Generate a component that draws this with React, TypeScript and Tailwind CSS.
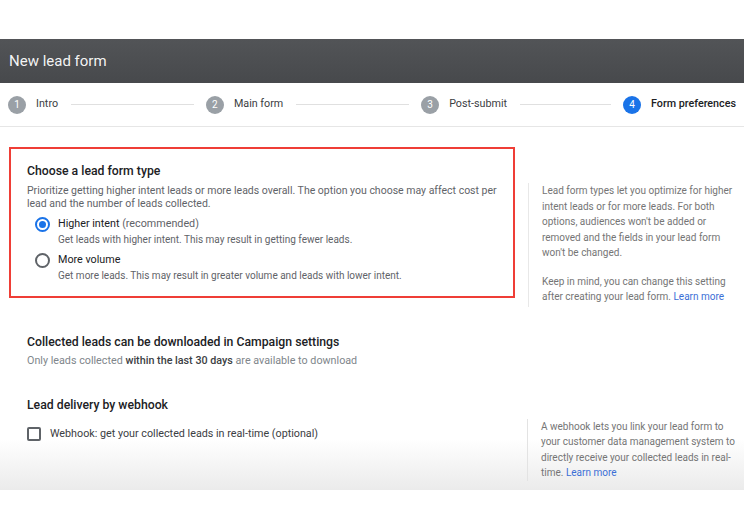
import { Fragment } from "react";

const STEPS = [
  { n: 1, label: "Intro", line: "basis-[122px]" },
  { n: 2, label: "Main form", line: "basis-[112px]" },
  { n: 3, label: "Post-submit", line: "basis-[90px]" },
  { n: 4, label: "Form preferences", active: true },
];

function Radio({ checked }: { checked?: boolean }) {
  return (
    <span
      className={`mt-[1px] flex size-[15px] shrink-0 items-center justify-center rounded-full border-2 ${
        checked ? "border-[#1a73e8]" : "border-[#5f6368]"
      }`}
    >
      {checked && <span className="size-[7px] rounded-full bg-[#1a73e8]" />}
    </span>
  );
}

export default function App() {
  return (
    <div className="h-[530px] w-[744px] overflow-hidden bg-white font-['Roboto',sans-serif] text-[#202124]">
      <div className="h-[39px]" />

      {/* Header */}
      <div className="flex h-[44px] items-center bg-linear-to-b from-[#525457] to-[#47494c] px-[9px]">
        <h1 className="text-[15px] text-white/95">New lead form</h1>
      </div>

      {/* Stepper */}
      <div className="flex h-[44px] items-center border-b border-[#e6e6e6] pl-[8px] pr-[8px]">
        {STEPS.map((s) => (
          <Fragment key={s.n}>
            <span
              className={`flex size-[18px] shrink-0 items-center justify-center rounded-full text-[10px] text-white ${
                s.active ? "bg-[#1a73e8]" : "bg-[#9aa0a6]"
              }`}
            >
              {s.n}
            </span>
            <span
              className={`ml-[10px] shrink-0 whitespace-nowrap text-[10.75px] ${
                s.active ? "font-medium text-[#202124]" : "text-[#3c4043]"
              }`}
            >
              {s.label}
            </span>
            {s.line && <span className={`ml-[13px] mr-[12px] h-px grow ${s.line} bg-[#e0e0e0]`} />}
          </Fragment>
        ))}
      </div>

      {/* Content */}
      <div className="h-[363px] bg-linear-to-b from-white from-86% to-[#ebebeb]">
        <div className="flex">
          <div className="w-[515px] shrink-0 pl-[9px] pt-[20px]">
            <div className="border-2 border-[#ef3e36] pb-[12px] pl-[16px] pr-[8px] pt-[13px]">
              <h2 className="text-[12.25px] font-medium leading-[18px]">Choose a lead form type</h2>
              <p className="mt-[5px] text-wrap text-[10.5px] leading-[12.5px] text-[#5f6368]">
                Prioritize getting higher intent leads or more leads overall. The option you choose may affect cost per
                lead and the number of leads collected.
              </p>
              <div className="mt-[6px] flex gap-[8px] pl-[8px]">
                <Radio checked />
                <div>
                  <div className="text-[10.75px] leading-[16px]">
                    Higher intent <span className="text-[#5f6368]">(recommended)</span>
                  </div>
                  <div className="text-[10px] leading-[16px] text-[#5f6368]">
                    Get leads with higher intent. This may result in getting fewer leads.
                  </div>
                </div>
              </div>
              <div className="mt-[4px] flex gap-[8px] pl-[8px]">
                <Radio />
                <div>
                  <div className="text-[10.75px] leading-[16px]">More volume</div>
                  <div className="text-[10px] leading-[16px] text-[#5f6368]">
                    Get more leads. This may result in greater volume and leads with lower intent.
                  </div>
                </div>
              </div>
            </div>
          </div>
          <div className="ml-[13px] mt-[56px] w-[216px] shrink-0 border-l border-[#e8e8e8] pb-[2px] pl-[13px] pr-[4px] text-[10px] leading-[15.5px] text-[#757575]">
            <p className="text-wrap">
              Lead form types let you optimize for higher intent leads or for more leads. For both options, audiences
              won&apos;t be added or removed and the fields in your lead form won&apos;t be changed.
            </p>
            <p className="mt-[13px] text-wrap">
              Keep in mind, you can change this setting after creating your lead form.{" "}
              <span className="text-[#3b6fd6]">Learn more</span>
            </p>
          </div>
        </div>

        <div className="pl-[27px] pt-[26px]">
          <h2 className="text-[12.25px] font-medium leading-[18px]">
            Collected leads can be downloaded in Campaign settings
          </h2>
          <p className="mt-[3px] text-[10.75px] leading-[14px] text-[#80868b]">
            Only leads collected <span className="font-medium text-[#3c4043]">within the last 30 days</span> are
            available to download
          </p>
        </div>

        <div className="flex pt-[28px]">
          <div className="w-[514px] shrink-0 pl-[27px]">
            <h2 className="text-[12.25px] font-medium leading-[18px]">Lead delivery by webhook</h2>
            <label className="mt-[12px] flex items-center gap-[9px]">
              <span className="size-[14px] rounded-[2px] border-2 border-[#5f6368]" />
              <span className="text-[10.75px] text-[#3c4043]">
                Webhook: get your collected leads in real-time (optional)
              </span>
            </label>
          </div>
          <div className="ml-[13px] mt-[23px] w-[217px] shrink-0 border-l border-[#e3e3e3] pl-[13px] pr-[8px] text-[10px] leading-[15.5px] text-[#757575]">
            A webhook lets you link your lead form to your customer data management system to directly receive your
            collected leads in real-time. <span className="text-[#3b6fd6]">Learn more</span>
          </div>
        </div>
      </div>
    </div>
  );
}
